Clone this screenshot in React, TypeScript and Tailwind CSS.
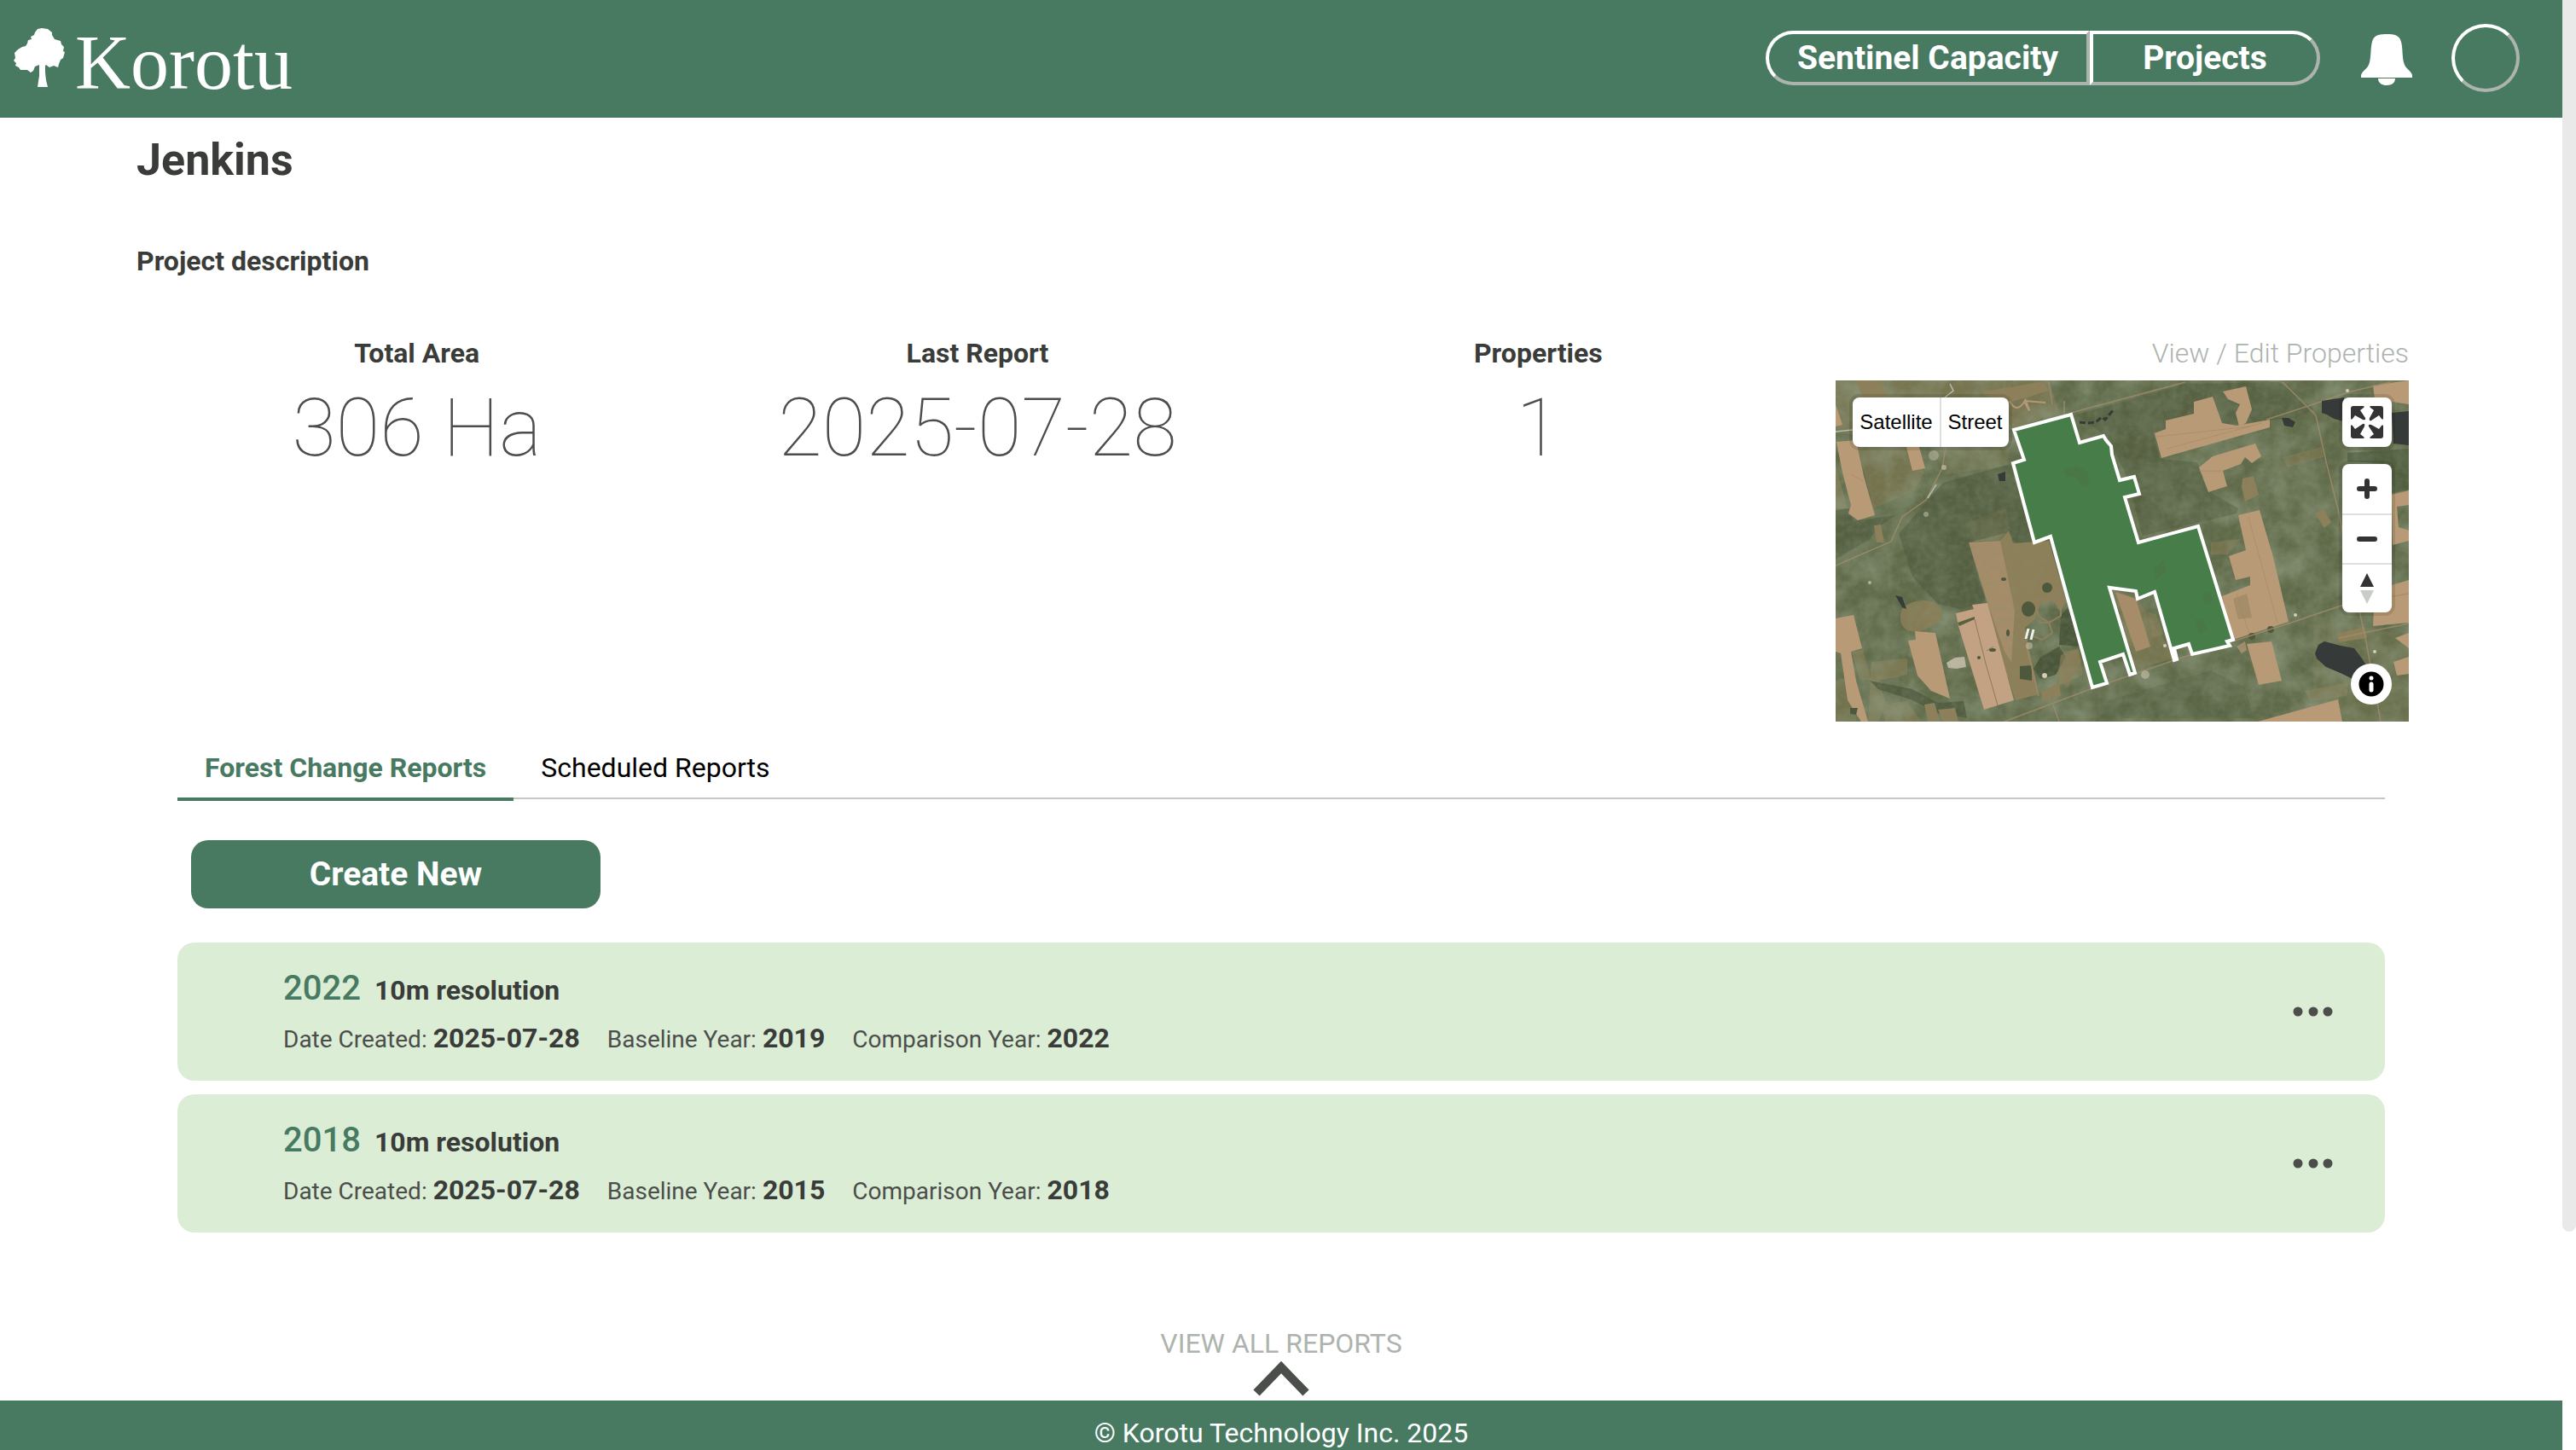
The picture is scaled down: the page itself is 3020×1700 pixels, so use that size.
import { useState } from 'react'
import clsx from 'clsx'

type Report = {
  year: string
  resolution: string
  created: string
  baseline: string
  comparison: string
}

const reports: Report[] = [
  { year: '2022', resolution: '10m resolution', created: '2025-07-28', baseline: '2019', comparison: '2022' },
  { year: '2018', resolution: '10m resolution', created: '2025-07-28', baseline: '2015', comparison: '2018' },
]

const stats = [
  { label: 'Total Area', value: '306 Ha' },
  { label: 'Last Report', value: '2025-07-28' },
  { label: 'Properties', value: '1' },
]

const tabs = ['Forest Change Reports', 'Scheduled Reports']

const outset = 'border-4 border-t-white border-l-white border-r-[#adb3ad] border-b-[#adb3ad]'

function TreeLogo() {
  return (
    <svg viewBox="0 0 60 69" className="w-[60px] h-[69px]" fill="#fff" aria-hidden="true">
      <path d="M28 1 33 0 40 1 45 5 45 8 48 13 55 15 56 19 59 22 58 27 60 28 58 35 55 37 53 42 52 46 47 44 42 46 38 43 37 44 37 52 38 61 40 69H28L30 56 30 43 25 45 23 50 20 52 16 49 8 49 6 46 2 44 3 41 0 38 2 35 1 29 5 25 10 22 14 21 16 18 17 14 21 13 20 10 24 8 25 5Z" />
    </svg>
  )
}

function BellIcon() {
  return (
    <svg viewBox="0 0 60 60" className="w-[60px] h-[60px]" fill="#fff" aria-hidden="true">
      <path d="M30 0c9 0 15 1 17 9 2 7 1 15 3 24 2 8 8 9 10 15v3H0v-3c2-6 8-7 10-15 2-9 1-17 3-24C15 1 21 0 30 0Z" />
      <path d="M20 52h20c0 5-4 8-10 8s-10-3-10-8Z" />
    </svg>
  )
}

function Header() {
  return (
    <header className="flex items-start justify-between h-[138px] bg-[#487a62] pl-4 pr-[50px] text-white">
      <a href="#home" className="flex items-start gap-3">
        <span className="pt-[33px]"><TreeLogo /></span>
        <span className="pt-6 font-['Liberation_Serif',serif] text-[90px] leading-[100px]">Korotu</span>
      </a>
      <div className="flex items-center pt-7">
        <nav className="flex h-16 text-[39px] leading-none font-bold">
          <button className={clsx('w-[380px] rounded-l-[32px]', outset)}>Sentinel Capacity</button>
          <button className={clsx('w-[270px] rounded-r-[32px]', outset)}>Projects</button>
        </nav>
        <button aria-label="Notifications" className="ml-12 pt-1"><BellIcon /></button>
        <button aria-label="Account" className={clsx('ml-[46px] size-20 rounded-full', outset)} />
      </div>
    </header>
  )
}

// Satellite imagery, drawn in map pixels
function Imagery() {
  return (
    <svg viewBox="0 0 672 400" preserveAspectRatio="xMidYMid slice" className="absolute inset-0 size-full" aria-hidden="true">
      <defs>
        <filter id="woods" x="0" y="0" width="100%" height="100%">
          <feTurbulence type="fractalNoise" baseFrequency="0.03" numOctaves="5" seed="8" />
          <feColorMatrix values="0 0 0 0 0.27  0 0 0 0 0.32  0 0 0 0 0.21  1.8 0 0 0 -0.6" />
        </filter>
        <filter id="grain" x="0" y="0" width="100%" height="100%">
          <feTurbulence type="fractalNoise" baseFrequency="0.14" numOctaves="3" seed="3" />
          <feColorMatrix values="0 0 0 0 0.24  0 0 0 0 0.27  0 0 0 0 0.17  0 0.9 0 0 -0.3" />
        </filter>
      </defs>
      <rect width="672" height="400" fill="#5f6a49" />
      <g fill="#7a7650">
        <path d="M0 0H250L262 38 205 58 130 70 0 62Z" opacity=".9" />
        <path d="M30 78H84L104 108 92 130 44 150 26 78Z" opacity=".8" />
        <path d="M112 80 205 78 200 100 130 110Z" opacity=".5" />
        <path d="M0 100 14 150 0 150Z" />
        <path d="M151 168 200 150 203 176 190 188 165 188Z" opacity=".9" />
        <path d="M440 190 475 186 460 204 440 204Z" opacity=".8" />
        <path d="M42 330 84 326 84 345 50 352 60 380 50 400H38Z" />
        <path d="M54 380 84 376 100 400H58Z" />
        <path d="M560 275 672 300V400H600L560 370Z" opacity=".3" />
        <path d="M262 318 285 316 290 345 262 358Z" />
        <path d="M19 318 32 316 42 352 28 350Z" />
        <path d="M0 352 20 345 24 400 0 400Z" opacity=".7" />
        <path d="M524 90 570 78 572 90 530 102Z" opacity=".8" />
        <path d="M550 364 600 354 600 370 556 376Z" />
        <path d="M366 272 376 274 384 298 372 302Z" />
      </g>
      <rect width="672" height="400" filter="url(#woods)" opacity=".8" />
      <g fill="#4a563a">
        <path d="M282 40 410 4 520 2 560 34 540 44 372 60 380 92 424 96 440 132 472 150 470 156 360 182 340 110 320 68Z" opacity=".4" />
        <path d="M126 120 205 98 232 190 212 192 203 178 156 190 176 260 146 268 120 262 90 230 74 180 100 150Z" opacity=".5" />
        <path d="M264 276 272 266 288 312 262 310Z" />
        <path d="M240 325 262 312 270 324 258 345 240 350 232 338Z" />
        <path d="M320 375 440 340 480 360 490 396H310Z" opacity=".25" />
        <path d="M40 352 90 362 120 378 150 376 154 396 120 390 88 374 50 362Z" opacity=".7" />
        <path d="M600 85 672 80V128L652 132V98L600 95Z" opacity=".6" />
        <path d="M0 152 16 150 20 165 70 158 50 172 40 186 0 210Z" opacity=".5" />
      </g>
      <g fill="#8d7f58">
        <path d="M193 188 203 176 208 191 250 188 270 258 264 272 255 258 240 262 234 280 222 290 228 320 238 368 211 375 191 318 178 261Z" />
        <path d="M170 14 244 1 250 12 200 27Z" />
        <path d="M24 0H52L60 19 32 21Z" />
        <path d="M477 115 490 112 496 134 480 142 476 125Z" />
        <path d="M562 156 572 151 581 166 573 173Z" />
        <path d="M78 268C88 256 114 254 122 266S116 290 98 294 72 284 78 268Z" opacity=".8" />
        <path d="M588 297 620 289 623 302 590 307Z" />
        <path d="M45 170 53 169 57 190 48 190Z" />
        <path d="M241 366 262 354 264 370 242 376Z" />
        <path d="M264 322 284 314 288 330 272 360 260 350Z" opacity=".6" />
        <path d="M104 380 116 378 122 400H108ZM120 386 140 384 144 400H126Z" />
        <path d="M325 245 354 256 390 312 400 325 352 338Z" opacity=".5" />
      </g>
      <path d="M156 190 193 188 210 270 206 330 198 318 178 261Z" fill="#a68c68" />
      <rect width="672" height="400" filter="url(#grain)" opacity=".55" />
      <g fill="none" stroke="#8f8060" strokeWidth="2">
        <path d="M234 258 250 256 264 262 264 276 250 284 238 276Z" />
        <path d="M238 284 250 284 254 296 242 304 232 300" />
        <path d="M222 22Q232 46 222 26M204 24Q212 40 222 24L246 26" stroke="#b6977a" />
      </g>
      <g fill="#b89a76">
        <path d="M1 72 24 70 33 112 46 158 26 164 15 156 18 146 8 108Z" />
        <path d="M83 78 98 78 105 103 90 106Z" />
        <path d="M0 28 8 52 0 54Z" />
        <path d="M374 62 387 57 387 47 420 39 420 25 442 19 453 50 470 53 509 46 509 55 382 91Z" />
        <path d="M454 13 481 7 488 34 481 50 473 54 469 38 474 28 460 22Z" />
        <path d="M426 102 442 89 492 74 499 89 488 97 480 90 475 98 454 106 459 124 437 131Z" />
        <path d="M472 158 497 152 513 207 531 283 466 304 453 253 486 240 486 230 469 234 461 206 481 199Z" />
        <path d="M482 309 511 306 523 352 496 357Z" />
        <path d="M495 400 589 374 594 400Z" />
        <path d="M85 305 94 304 93 294 117 296 134 373 112 364 96 346Z" />
        <path d="M0 279 21 275 31 314 18 318 24 352 38 400 30 400 14 375 6 320 0 318Z" />
        <path d="M630 6 672 0V28L632 22Z" />
        <path d="M652 134 672 129V146L658 148 660 172 672 176V188L653 193Z" />
        <path d="M632 246 672 234V284L630 288Z" />
        <path d="M656 302 672 296V314Z" />
        <path d="M654 330 672 324V344L658 346Z" />
        <path d="M480 306 470 312 476 320 482 316Z" opacity=".7" />
      </g>
      <path d="M328 248 352 256 369 312 352 318Z" fill="#a68c68" />
      <path d="M141 273 162 268 160 263 178 261 209 375 174 386 144 288Z" fill="#c2a283" />
      <path d="M143 284 163 277 163 280 145 288Z" fill="#59613f" />
      <path d="M163 280 176 332 190 381M185 312 177 317" fill="none" stroke="#8d7a5a" />
      <path d="M376 66 486 54M389 80 500 50M484 160 518 284M470 250 486 300M18 110 32 118M426 106 452 106" fill="none" stroke="#a58764" opacity=".6" />
      <path d="M466 256 482 250 488 278 472 280Z" fill="#9a8560" opacity=".6" />
      <g fill="#4e583c">
        <circle cx="248" cy="243" r="6" />
        <ellipse cx="226" cy="268" rx="8" ry="9" />
        <path d="M216 335 230 334 230 352 216 350Z" />
        <ellipse cx="197" cy="233" rx="3" ry="2" />
        <ellipse cx="202" cy="296" rx="2" ry="4" />
        <ellipse cx="184" cy="316" rx="4" ry="2" />
        <circle cx="168" cy="325" r="2" />
        <circle cx="488" cy="300" r="4" />
        <circle cx="510" cy="292" r="4" />
        <path d="M17 384 26 384 24 392 17 391Z" />
      </g>
      <g fill="none" stroke="#a18d6b" strokeWidth="1.5" opacity=".8">
        <path d="M0 217 65 189 78 160 106 140 125 103 129 78" />
        <path d="M276 38 410 2" />
        <path d="M524 2 563 41 575 95 589 151 605 230 621 301 639 400" />
        <path d="M198 400 301 361 400 327 534 284 593 264 672 250" />
        <path d="M505 46 560 28 600 14 650 2M224 312 238 370M250 2 254 28M268 24 268 42M590 302 672 285M255 380 262 400" />
      </g>
      <path d="M0 60 20 58M128 20 138 12 134 4M108 138 118 122" fill="none" stroke="#b5bcb0" strokeWidth="1.5" />
      <g fill="#363a38">
        <path d="M570 24 596 20V48L584 45 576 40 570 38Z" />
        <path d="M652 38 672 36V76L654 74Z" />
        <path d="M523 44 531 44 539 49 536 55 526 53Z" />
        <path d="M562 320 566 310 573 306 592 311 608 314 617 326 622 334 606 350 594 344 575 336 564 326Z" />
        <path d="M190 110 199 107 199 118 192 118Z" />
        <path d="M70 252 78 254 83 268 78 266Z" />
      </g>
      <path d="M286 49 296 50 305 49 312 43 316 46 326 34" fill="none" stroke="#363a38" strokeWidth="3" strokeDasharray="7 3" />
      <path d="M226 291 223 303 M232 292 229 304" stroke="#eef1ec" strokeWidth="3" />
      <g fill="#d5c9b8">
        <path d="M130 331 140 325 151 324 153 336 142 338 132 337Z" opacity=".75" />
        <circle cx="245" cy="346" r="3" />
        <circle cx="539" cy="275" r="2" />
        <circle cx="386" cy="311" r="2" />
        <circle cx="600" cy="12" r="2" />
        <circle cx="632" cy="318" r="2" />
        <circle cx="363" cy="345" r="5" opacity=".5" />
        <circle cx="106" cy="157" r="3" opacity=".5" />
        <circle cx="115" cy="88" r="6" opacity=".4" />
        <circle cx="227" cy="311" r="4" opacity=".5" />
        <circle cx="40" cy="237" r="2" opacity=".7" />
        <circle cx="127" cy="102" r="3" opacity=".6" />
      </g>
      <path
        d="M209 58 276 40 286 73 314 65 317 70 323 77 324 87 333 117 350 113 356 133 339 137 355 190 425 171 466 304 459 306 462 311 418 321 414 309 397 314 400 327 397 328 374 248 354 256 352 247 321 243 351 343 345 345 337 321 310 330 318 355 301 360 252 183 233 190 208 97 221 93Z"
        fill="#467d48"
        stroke="#fff"
        strokeWidth="4"
      />
      <g fill="#4c7346" opacity=".5">
        <path d="M268 104 282 100 296 108 298 122 288 124 282 114 270 112Z" />
        <path d="M372 222 384 210 388 222 376 234Z" />
        <path d="M430 250 440 248 442 260 432 262Z" />
        <path d="M421 280 430 280 436 294 426 296Z" />
      </g>
    </svg>
  )
}

const control = 'flex items-center justify-center bg-white'
const group = 'absolute flex overflow-hidden rounded-lg shadow-[0_0_0_4px_rgba(0,0,0,0.1)]'

function PropertyMap() {
  return (
    <div className="relative h-[400px] w-[672px] overflow-hidden">
      <Imagery />
      <div className={clsx(group, "left-5 top-5 h-[58px] font-['Liberation_Sans',sans-serif] text-2xl leading-none text-black")}>
        <button className={clsx(control, 'w-[102px]')}>Satellite</button>
        <button className={clsx(control, 'w-[81px] border-l-2 border-[#dde0dd]')}>Street</button>
      </div>
      <div className={clsx(group, 'right-5 top-5')}>
        <button aria-label="Enter fullscreen" className={clsx(control, 'size-[58px]')}>
          <svg viewBox="0 0 40 40" className="size-10" fill="#333">
            {[0, 90, 180, 270].map(angle => (
              <path
                key={angle}
                transform={`rotate(${angle} 20 20)`}
                d="M4 1H15Q18 1 16 3L12 6 18 15Q19 18 15 17L6 12 3 16Q1 18 1 15V4Q1 1 4 1Z"
              />
            ))}
          </svg>
        </button>
      </div>
      <div className={clsx(group, 'right-5 top-[98px] flex-col')}>
        <button aria-label="Zoom in" className={clsx(control, 'size-[58px]')}>
          <svg viewBox="0 0 24 24" className="size-6" stroke="#333" strokeWidth="6" strokeLinecap="round">
            <path d="M3 12H21M12 3V21" />
          </svg>
        </button>
        <button aria-label="Zoom out" className={clsx(control, 'size-[58px] border-t-2 border-[#dde0dd]')}>
          <svg viewBox="0 0 24 24" className="size-6" stroke="#333" strokeWidth="6" strokeLinecap="round">
            <path d="M3 12H21" />
          </svg>
        </button>
        <button aria-label="Reset bearing to north" className={clsx(control, 'size-[58px] border-t-2 border-[#dde0dd]')}>
          <svg viewBox="0 0 16 36" className="h-9 w-4">
            <path d="M0 16 8 0 16 16Z" fill="#333" />
            <path d="M0 20 8 36 16 20Z" fill="#c8cdc7" />
          </svg>
        </button>
      </div>
      <button aria-label="Toggle attribution" className="absolute bottom-5 right-5 flex size-12 items-center justify-center rounded-full bg-white">
        <svg viewBox="0 0 30 30" className="size-[30px]">
          <circle cx="15" cy="15" r="14.5" fill="#000" />
          <circle cx="15" cy="8" r="2.5" fill="#fff" />
          <path d="M15 15V22" stroke="#fff" strokeWidth="5" strokeLinecap="round" />
        </svg>
      </button>
    </div>
  )
}

function ReportCard({ report }: { report: Report }) {
  const details = [
    { label: 'Date Created:', value: report.created },
    { label: 'Baseline Year:', value: report.baseline },
    { label: 'Comparison Year:', value: report.comparison },
  ]
  return (
    <li className="flex items-center justify-between h-[162px] rounded-[20px] bg-[#dbedd5] pl-[124px] pr-[60px]">
      <div className="pt-1.5">
        <h2 className="flex items-baseline gap-4 leading-[56px]">
          <span className="text-[40px] font-medium text-[#487a62]">{report.year}</span>
          <span className="text-[32px] font-bold">{report.resolution}</span>
        </h2>
        <dl className="flex gap-8 leading-[56px]">
          {details.map(d => (
            <div key={d.label} className="flex items-baseline gap-[7px]">
              <dt className="text-[28px] text-[#4c4e4b]">{d.label}</dt>
              <dd className="text-[32px] font-bold">{d.value}</dd>
            </div>
          ))}
        </dl>
      </div>
      <button aria-label={`Options for ${report.year} report`}>
        <svg viewBox="0 0 48 12" className="h-3 w-12" fill="#4c4e4b">
          <circle cx="6" cy="6" r="5.5" />
          <circle cx="24" cy="6" r="5.5" />
          <circle cx="41" cy="6" r="5.5" />
        </svg>
      </button>
    </li>
  )
}

export default function App() {
  const [activeTab, setActiveTab] = useState(tabs[0])

  return (
    <div className="flex min-h-screen bg-white font-[Roboto,sans-serif] text-[#3a3c39]">
      <div className="flex min-h-screen min-w-0 flex-1 flex-col">
        <Header />

        <main className="flex-1 px-40">
          <h1 className="pt-4 text-[52px] leading-[68px] font-bold">Jenkins</h1>
          <p className="pt-[60px] text-[32px] leading-[48px] font-bold">Project description</p>

          <section className="flex pt-[60px]">
            {stats.map(s => (
              <div key={s.label} className="flex-1 text-center">
                <h2 className="text-[32px] leading-[48px] font-bold">{s.label}</h2>
                <p className="text-[94px] leading-[128px] font-thin text-[#4c4e4b]">{s.value}</p>
              </div>
            ))}
            <div className="px-5">
              <a href="#properties" className="block pb-2 text-right text-[32px] leading-[48px] font-light text-[#adb3ad]">
                View / Edit Properties
              </a>
              <PropertyMap />
            </div>
          </section>

          <section className="px-12 pt-6">
            <div role="tablist" className="flex h-[67px] border-b-2 border-[#c3c8c2] text-[32px] leading-[60px]">
              {tabs.map(tab => (
                <button
                  key={tab}
                  role="tab"
                  aria-selected={tab === activeTab}
                  onClick={() => setActiveTab(tab)}
                  className={clsx(
                    'flex h-[69px] items-start px-8',
                    tab === activeTab ? 'border-b-4 border-[#487a62] font-bold text-[#487a62]' : 'text-black'
                  )}
                >
                  {tab}
                </button>
              ))}
            </div>

            <button className="mt-12 ml-4 h-20 w-[480px] rounded-[20px] bg-[#487a62] text-[39px] leading-none font-bold text-white">
              Create New
            </button>

            <ul className="flex flex-col gap-4 pt-10">
              {reports.map(r => <ReportCard key={r.year} report={r} />)}
            </ul>
          </section>
        </main>

        <button className="flex flex-col items-center self-center pb-[5px] text-[32px] leading-[40px] text-[#adb3ad]">
          VIEW ALL REPORTS
          <svg viewBox="0 0 66 42" className="h-[42px] w-[66px]" fill="none" stroke="#4c4e4b" strokeWidth="10">
            <path d="M4 38 33 8 62 38" />
          </svg>
        </button>
        <footer className="h-[58px] bg-[#487a62] pt-4 text-center text-[32px] leading-[44px] text-white">
          © Korotu Technology Inc. 2025
        </footer>
      </div>

      {/* Scroll thumb */}
      <div className="h-[1444px] w-4 shrink-0 rounded-b-lg bg-[#e9e9e9]" />
    </div>
  )
}
